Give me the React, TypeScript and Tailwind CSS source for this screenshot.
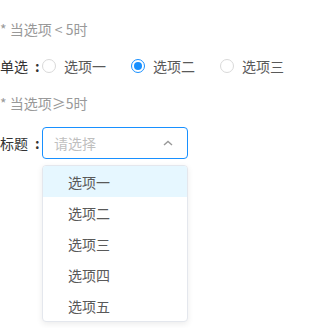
import React from 'react';

const radios = ['选项一', '选项二', '选项三'];
const options = ['选项一', '选项二', '选项三', '选项四', '选项五'];

function Label({ text }: { text: string }) {
  return (
    <span className="w-[42px] flex items-center text-[#333]">
      {text}
      <span className="ml-[7px] font-bold">:</span>
    </span>
  );
}

export default function App() {
  return (
    <div
      className="w-[309px] h-[328px] bg-white pt-[19px] text-[14px] leading-5"
      style={{ fontFamily: '"Noto Sans CJK SC", "Noto Sans", sans-serif' }}
    >
      <p className="text-[#999]">* 当选项 &lt; 5时</p>

      <div className="mt-[17px] flex items-center h-5">
        <Label text="单选" />
        {radios.map((r, i) => (
          <label key={r} className="flex items-center mr-[25px]">
            {i === 1 ? (
              <span className="w-[14px] h-[14px] rounded-full border border-[#1890ff] flex items-center justify-center">
                <span className="w-[8px] h-[8px] rounded-full bg-[#1890ff]" />
              </span>
            ) : (
              <span className="w-[14px] h-[14px] rounded-full border border-[#d9d9d9] bg-white" />
            )}
            <span className="ml-2 text-[#595959]">{r}</span>
          </label>
        ))}
      </div>

      <p className="mt-[17px] text-[#999]">* 当选项≥5时</p>

      <div className="mt-[14px] flex items-start">
        <div className="h-8 flex items-center">
          <Label text="标题" />
        </div>
        <div className="relative">
          <div className="w-[146px] h-8 border border-[#1890ff] rounded-[4px] flex items-center justify-between pl-[11px] pr-[14px]">
            <span className="text-[#bfbfbf]">请选择</span>
            <svg width="10" height="6" viewBox="0 0 10 6" fill="none">
              <path d="M1 5L5 1.5L9 5" stroke="#999" strokeWidth="1.4" />
            </svg>
          </div>
          <ul className="absolute top-[38px] left-0 w-[146px] bg-white border border-[#e4e7ed] rounded-[4px] shadow-[0_2px_6px_rgba(0,0,0,0.08)] overflow-hidden">
            {options.map((o, i) => (
              <li
                key={o}
                className={`h-[31px] flex items-center pl-[25px] text-[#595959] ${i === 0 ? 'bg-[#e6f7ff]' : ''}`}
              >
                {o}
              </li>
            ))}
          </ul>
        </div>
      </div>
    </div>
  );
}
